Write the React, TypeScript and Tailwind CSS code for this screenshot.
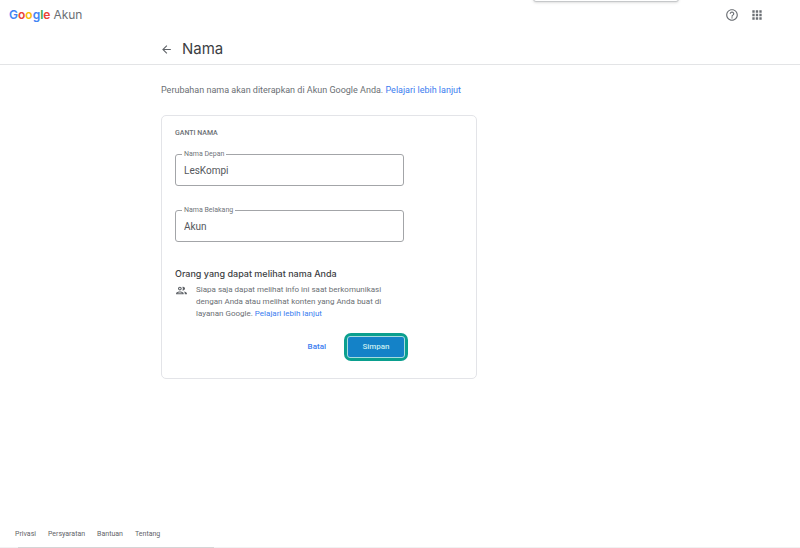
import { useState } from 'react'

interface NameFieldProps {
  id: string
  label: string
  value: string
  onChange: (value: string) => void
}

const LOGO_LETTERS = [
  { letter: 'G', color: 'text-[#4285f4]' },
  { letter: 'o', color: 'text-[#ea4335]' },
  { letter: 'o', color: 'text-[#fbbc04]' },
  { letter: 'g', color: 'text-[#4285f4]' },
  { letter: 'l', color: 'text-[#34a853]' },
  { letter: 'e', color: 'text-[#ea4335]' },
]

const FOOTER_LINKS = ['Privasi', 'Persyaratan', 'Bantuan', 'Tentang']

function NameField({ id, label, value, onChange }: NameFieldProps) {
  return (
    <div className="relative w-[229px] max-w-full">
      <label htmlFor={id} className="absolute -top-1 left-[7px] bg-white px-0.5 text-[7px] leading-[8px] text-[#70757a]">
        {label}
      </label>
      <input
        id={id}
        type="text"
        value={value}
        onChange={(e) => onChange(e.target.value)}
        className="block h-8 w-full rounded-[3px] border border-[#a3a5a8] bg-white px-2 text-[10px] text-[#55585c] outline-none"
      />
    </div>
  )
}

function Header() {
  return (
    <header className="relative border-b border-[#e3e4e6]">
      <div className="absolute -top-2 left-[533px] h-[10px] w-[146px] rounded-[3px] border border-[#c6c8ca] bg-white shadow-sm" />
      <div className="flex h-[30px] items-center justify-between pr-9 pl-[9px]">
        <a href="#" className="flex items-center gap-[3px] font-['Inter',sans-serif] text-xs leading-4">
          <span className="font-semibold">
            {LOGO_LETTERS.map(({ letter, color }, index) => (
              <span key={index} className={color}>
                {letter}
              </span>
            ))}
          </span>
          <span className="text-[#6b6f74]">Akun</span>
        </a>
        <div className="flex items-center gap-[11px] text-[#6b6f74]">
          <button type="button" aria-label="Bantuan">
            <svg viewBox="0 0 24 24" className="size-[14px]" fill="currentColor">
              <path d="M11 18h2v-2h-2v2zm1-16C6.48 2 2 6.48 2 12s4.48 10 10 10 10-4.48 10-10S17.52 2 12 2zm0 18c-4.41 0-8-3.59-8-8s3.59-8 8-8 8 3.59 8 8-3.59 8-8 8zm0-14c-2.21 0-4 1.79-4 4h2c0-1.1.9-2 2-2s2 .9 2 2c0 2-3 1.75-3 5h2c0-2.25 3-2.5 3-5 0-2.21-1.79-4-4-4z" />
            </svg>
          </button>
          <button type="button" aria-label="Aplikasi Google">
            <svg viewBox="0 0 24 24" className="size-[14px]" fill="currentColor">
              <path d="M4 8h4V4H4v4zm6 12h4v-4h-4v4zm-6 0h4v-4H4v4zm0-6h4v-4H4v4zm6 0h4v-4h-4v4zm6-10v4h4V4h-4zm-6 4h4V4h-4v4zm6 6h4v-4h-4v4zm0 6h4v-4h-4v4z" />
            </svg>
          </button>
        </div>
      </div>
      <div className="flex items-center gap-[9px] pt-[7px] pb-[3px] pl-40">
        <button type="button" aria-label="Kembali" className="text-[#5f6368]">
          <svg viewBox="0 0 24 24" className="size-[13px]" fill="currentColor">
            <path d="M20 11H7.83l5.59-5.59L12 4l-8 8 8 8 1.41-1.41L7.83 13H20v-2z" />
          </svg>
        </button>
        <h1 className="font-['Inter',sans-serif] text-[15px] leading-6 text-[#3c4043]">Nama</h1>
      </div>
    </header>
  )
}

function Footer() {
  return (
    <footer className="mt-auto">
      <nav className="flex gap-3 px-[15px] pb-2 text-[7px] leading-[10px] text-[#5f6368]">
        {FOOTER_LINKS.map((link) => (
          <a key={link} href="#">
            {link}
          </a>
        ))}
      </nav>
      <div className="flex h-px bg-[#f1f1f2]">
        <div className="ml-[18px] w-[196px] bg-[#d4d5d6]" />
      </div>
    </footer>
  )
}

export default function App() {
  const [firstName, setFirstName] = useState('LesKompi')
  const [lastName, setLastName] = useState('Akun')

  return (
    <div className="flex min-h-screen flex-col bg-white font-['Roboto',sans-serif] text-[#6b6f74]">
      <Header />
      <main className="mb-4 pt-[18px] pr-4 pl-[161px]">
        <p className="text-[9px] leading-[14px]">
          Perubahan nama akan diterapkan di Akun Google Anda.{' '}
          <a href="#" className="text-[#3b7df0]">
            Pelajari lebih lanjut
          </a>
        </p>

        <form
          onSubmit={(e) => e.preventDefault()}
          className="mt-[18px] max-w-[316px] rounded-[5px] border border-[#e3e4e8] px-[13px] pt-3 pb-[17px]"
        >
          <h2 className="text-[7px] leading-[10px] font-medium">GANTI NAMA</h2>
          <div className="mt-4 space-y-6">
            <NameField id="first-name" label="Nama Depan" value={firstName} onChange={setFirstName} />
            <NameField id="last-name" label="Nama Belakang" value={lastName} onChange={setLastName} />
          </div>

          <h3 className="mt-[25px] font-['Inter',sans-serif] text-[9px] leading-[14px] font-medium text-[#3c4043]">
            Orang yang dapat melihat nama Anda
          </h3>
          <div className="mt-[3px] flex items-start gap-2">
            <svg viewBox="0 0 24 24" className="size-[13px] shrink-0 text-[#5f6368]" fill="currentColor">
              <path d="M9 13.75c-2.34 0-7 1.17-7 3.5V19h14v-1.75c0-2.33-4.66-3.5-7-3.5zM4.34 17c.84-.58 2.87-1.25 4.66-1.25s3.82.67 4.66 1.25H4.34zM9 12c1.93 0 3.5-1.57 3.5-3.5S10.93 5 9 5 5.5 6.57 5.5 8.5 7.07 12 9 12zm0-5c.83 0 1.5.67 1.5 1.5S9.83 10 9 10s-1.5-.67-1.5-1.5S8.17 7 9 7zm7.04 6.81c1.16.84 1.96 1.96 1.96 3.44V19h4v-1.75c0-2.02-3.5-3.17-5.96-3.44zM15 12c1.93 0 3.5-1.57 3.5-3.5S16.93 5 15 5c-.54 0-1.04.13-1.5.35.63.89 1 1.98 1 3.15s-.37 2.26-1 3.15c.46.22.96.35 1.5.35z" />
            </svg>
            <p className="max-w-[200px] text-[8px] leading-[12px]">
              Siapa saja dapat melihat info ini saat berkomunikasi dengan Anda atau melihat konten yang Anda buat di
              layanan Google.{' '}
              <a href="#" className="text-[#3b7df0]">
                Pelajari lebih lanjut
              </a>
            </p>
          </div>

          <div className="mt-[13px] flex w-[233px] max-w-full items-center justify-end gap-[18px] text-[8px] font-medium">
            <button type="button" className="text-[#3b7df0]">
              Batal
            </button>
            <button type="submit" className="rounded-[7px] bg-[#0a9f8e] p-[3px] text-[#c4ecf0]">
              <span className="flex h-[22px] w-[58px] items-center justify-center rounded-[3px] border border-[#a5dce0] bg-[#1482c8]">
                Simpan
              </span>
            </button>
          </div>
        </form>
      </main>
      <Footer />
    </div>
  )
}
